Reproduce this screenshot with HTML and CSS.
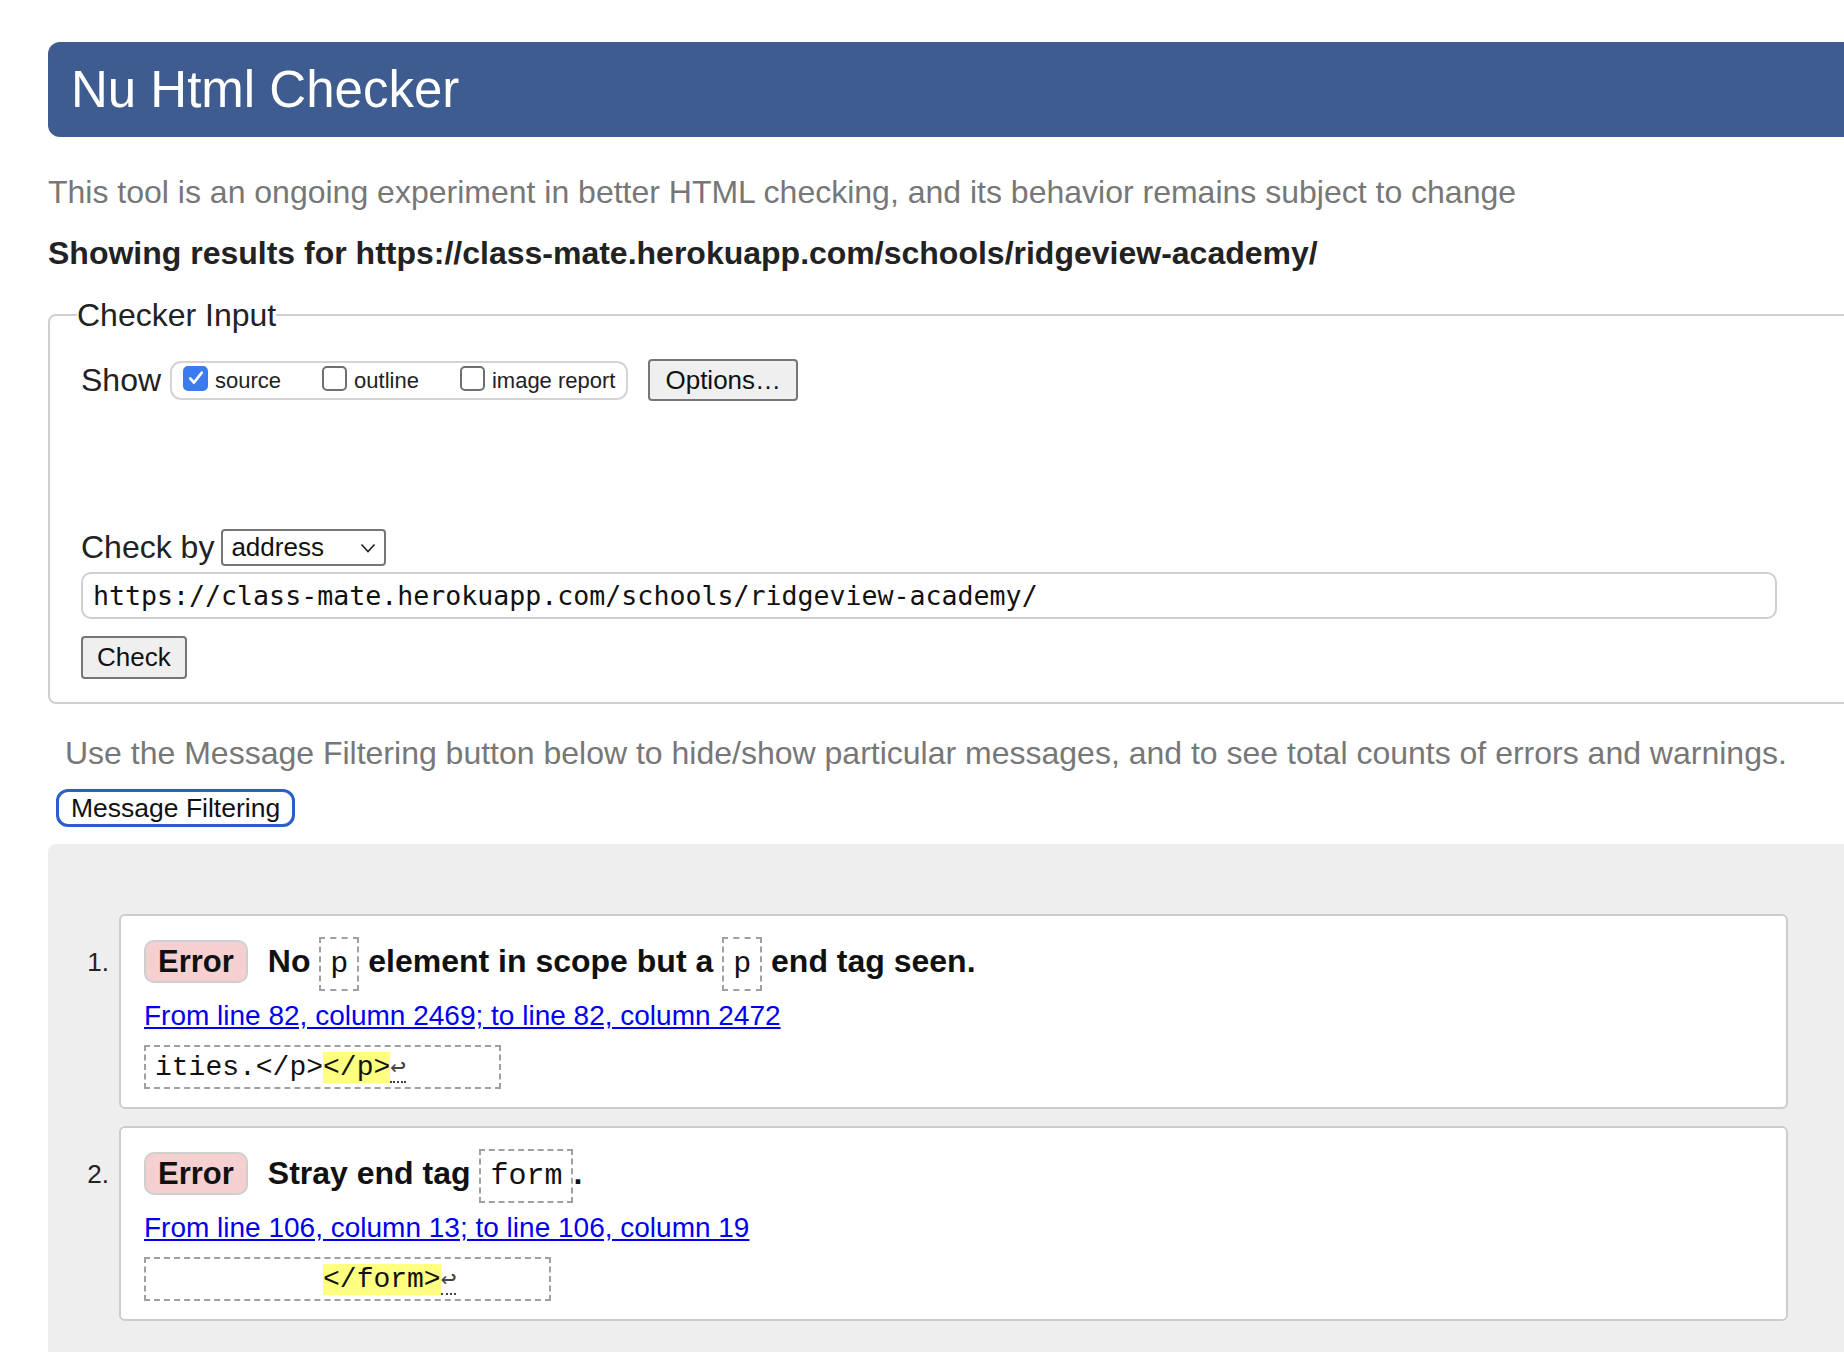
FILE: index.html
```html
<!DOCTYPE html>
<html lang="en">
<head>
<meta charset="utf-8">
<title>Nu Html Checker</title>
<link rel="stylesheet" href="styles.css">
</head>
<body>
<div class="page">
  <header class="masthead"><h1>Nu Html Checker</h1></header>
  <p class="intro">This tool is an ongoing experiment in better HTML checking, and its behavior remains subject to change</p>
  <p class="showing">Showing results for https://class-mate.herokuapp.com/schools/ridgeview-academy/</p>

  <fieldset class="checker">
    <legend>Checker Input</legend>
    <div class="show-row">
      <span class="big-label">Show</span>
      <span class="checks">
        <label class="check"><span class="box on"><svg viewBox="0 0 24 24" width="20" height="20"><path d="M5 12.5l4.5 5L19 5.5" fill="none" stroke="#fff" stroke-width="3.2" stroke-linecap="round" stroke-linejoin="round"/></svg></span>source</label>
        <label class="check"><span class="box"></span>outline</label>
        <label class="check"><span class="box"></span>image report</label>
      </span>
      <button class="btn btn-options" type="button">Options…</button>
    </div>
    <div class="spacer"></div>
    <div class="checkby-row">
      <span class="big-label">Check by</span>
      <span class="select">address<svg class="chev" viewBox="0 0 16 10" width="16" height="10"><path d="M1.5 1.5L8 8.5l6.5-7" fill="none" stroke="#222" stroke-width="1.6"/></svg></span>
    </div>
    <div class="url">https://class-mate.herokuapp.com/schools/ridgeview-academy/</div>
    <button class="btn btn-check" type="button">Check</button>
  </fieldset>

  <p class="filter-note">Use the Message Filtering button below to hide/show particular messages, and to see total counts of errors and warnings.</p>
  <button class="btn-filter" type="button">Message Filtering</button>

  <section class="results">
    <ol class="messages">
      <li class="item">
        <span class="num">1.</span>
        <div class="card">
          <div class="msg-head">
            <span class="badge">Error</span>
            <p class="msg-text">No <code>p</code> element in scope but a <code>p</code> end tag seen.</p>
          </div>
          <a class="loc" href="#l82">From line 82, column 2469; to line 82, column 2472</a>
          <div class="extract"><code>ities.&lt;/p&gt;<b class="hl">&lt;/p&gt;</b><span class="lf">↩</span>     </code></div>
        </div>
      </li>
      <li class="item">
        <span class="num">2.</span>
        <div class="card">
          <div class="msg-head">
            <span class="badge">Error</span>
            <p class="msg-text">Stray end tag <code>form</code>.</p>
          </div>
          <a class="loc" href="#l106">From line 106, column 13; to line 106, column 19</a>
          <div class="extract"><code>          <b class="hl">&lt;/form&gt;</b><span class="lf">↩</span>     </code></div>
        </div>
      </li>
    </ol>
  </section>
</div>
</body>
</html>
```

FILE: styles.css
```css
html, body {
  margin: 0;
  padding: 0;
  overflow: hidden;
  background: #fff;
}
body {
  font-family: "Liberation Sans", Arial, sans-serif;
  color: #222;
}
.page {
  width: 1900px;
  padding: 42px 0 0 48px;
}
.masthead {
  background: #3e5c8f;
  border-radius: 12px 0 0 12px;
  height: 95px;
  display: flex;
  align-items: center;
  padding-left: 23px;
}
.masthead h1 {
  margin: 0;
  font-size: 51px;
  font-weight: normal;
  color: #fff;
  line-height: 1;
}
.intro {
  margin: 38px 0 0;
  font-size: 32px;
  line-height: 34px;
  color: #777;
}
.showing {
  margin: 27px 0 0;
  font-size: 32px;
  line-height: 34px;
  font-weight: bold;
  color: #222;
}
.checker {
  margin: 26px 0 0;
  width: 1850px;
  box-sizing: border-box;
  border: 2px solid #cfcfcf;
  border-radius: 8px;
  padding: 0 31px 23px 31px;
}
.checker legend {
  font-size: 32px;
  line-height: 38px;
  padding: 0;
  margin-left: -4px;
  color: #222;
}
.big-label {
  font-size: 32px;
  line-height: 38px;
  color: #222;
}
.show-row {
  display: flex;
  align-items: center;
  margin-top: 25px;
  height: 42px;
}
.checks {
  display: inline-flex;
  align-items: center;
  margin-left: 9px;
  height: 39px;
  box-sizing: border-box;
  border: 2px solid #d4d4d4;
  border-radius: 11px;
  padding: 0 11px 0 11px;
  gap: 41px;
}
.check {
  display: inline-flex;
  align-items: flex-end;
  font-size: 22px;
  line-height: 25px;
  color: #222;
  gap: 7px;
}
.box {
  display: inline-flex;
  align-items: center;
  justify-content: center;
  width: 25px;
  height: 25px;
  box-sizing: border-box;
  border: 2px solid #6f6f6f;
  border-radius: 5px;
  background: #fff;
  position: relative;
  top: -2px;
}
.box.on {
  background: #3a7bf0;
  border-color: #3a7bf0;
}
.btn {
  font-family: "Liberation Sans", Arial, sans-serif;
  font-size: 26px;
  color: #111;
  background: #efefef;
  border: 2px solid #767676;
  border-radius: 4px;
  box-sizing: border-box;
}
.btn-options {
  margin-left: 20px;
  height: 42px;
  padding: 0 15px;
}
.spacer {
  height: 127px;
}
.checkby-row {
  display: flex;
  align-items: center;
  height: 38px;
}
.select {
  display: inline-flex;
  align-items: center;
  justify-content: space-between;
  margin-left: 7px;
  width: 165px;
  height: 37px;
  box-sizing: border-box;
  border: 2px solid #767676;
  border-radius: 4px;
  padding: 0 8px 0 8px;
  font-size: 26px;
  color: #111;
  background: #fff;
}
.chev {
  margin-top: 2px;
}
.url {
  margin-top: 6px;
  width: 1696px;
  height: 47px;
  box-sizing: border-box;
  border: 2px solid #cfcfcf;
  border-radius: 10px;
  padding: 0 10px;
  font-family: "DejaVu Sans Mono", monospace;
  font-size: 26.6px;
  line-height: 43px;
  color: #111;
}
.btn-check {
  display: block;
  margin-top: 17px;
  height: 43px;
  padding: 0 14px;
}
.filter-note {
  margin: 32px 0 0 17px;
  font-size: 32px;
  line-height: 35px;
  color: #777;
}
.btn-filter {
  display: block;
  margin: 18px 0 0 8px;
  height: 38px;
  padding: 0 12px;
  box-sizing: border-box;
  border: 3px solid #2b5fc7;
  border-radius: 12px;
  background: #fff;
  font-family: "Liberation Sans", Arial, sans-serif;
  font-size: 26.5px;
  line-height: 30px;
  color: #111;
}
.results {
  margin-top: 17px;
  background: #eeeeee;
  border-radius: 8px 0 0 0;
  padding: 70px 0 60px 0;
  min-height: 600px;
}
.messages {
  list-style: none;
  margin: 0;
  padding: 0;
  display: flex;
  flex-direction: column;
  gap: 17px;
}
.item {
  display: flex;
  align-items: flex-start;
}
.num {
  width: 61px;
  padding-right: 10px;
  text-align: right;
  font-size: 26px;
  line-height: 31px;
  margin-top: 33px;
  color: #222;
}
.card {
  width: 1669px;
  box-sizing: border-box;
  background: #fff;
  border: 2px solid #cccccc;
  border-radius: 6px;
  padding: 24px 23px 18px 23px;
}
.msg-head {
  display: flex;
  align-items: baseline;
  gap: 20px;
}
.badge {
  display: inline-block;
  font-size: 31px;
  font-weight: bold;
  line-height: 39px;
  padding: 0 12px;
  border: 2px solid #cfcfcf;
  border-radius: 10px;
  background: #f6d0d1;
  color: #111;
}
.msg-text {
  margin: 0;
  font-size: 32px;
  font-weight: bold;
  line-height: 39px;
  color: #111;
}
.msg-text code {
  font-family: "Liberation Mono", "Courier New", monospace;
  font-weight: normal;
  font-size: 30px;
  padding: 8px 9px;
  border: 2px dashed #a0a0a0;
}
.loc {
  display: block;
  margin-top: 16px;
  font-size: 28px;
  line-height: 32px;
  color: #0000ee;
  text-decoration: underline;
  width: max-content;
}
.extract {
  margin-top: 13px;
  display: inline-block;
  border: 2px dashed #a0a0a0;
  padding: 4px 9px;
}
.extract code {
  font-family: "Liberation Mono", "Courier New", monospace;
  font-size: 28px;
  line-height: 30px;
  white-space: pre;
  color: #111;
}
.hl {
  font-weight: normal;
  background: #ffff80;
}
.lf {
  font-family: "DejaVu Sans Mono", monospace;
  font-size: 26px;
  color: #444;
  border-bottom: 2px dotted #444;
}
```
